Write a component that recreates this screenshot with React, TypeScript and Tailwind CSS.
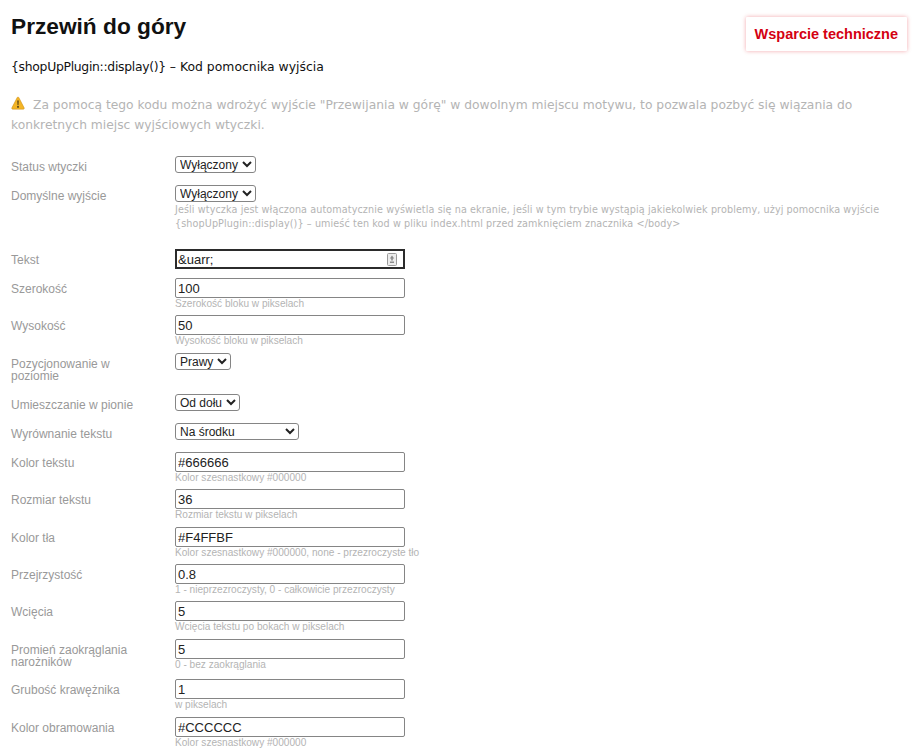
const verdana = "font-['DejaVu_Sans','Liberation_Sans',sans-serif]";

function Hint({ children }: { children: React.ReactNode }) {
  return <p className="text-[10.1px] leading-[12px] text-[#b4b4b4] whitespace-nowrap">{children}</p>;
}

function Row({ label, children, gap }: { label: React.ReactNode; children: React.ReactNode; gap: string }) {
  return (
    <div className={`flex ${gap}`}>
      <div className="w-[164px] shrink-0 pt-[5px] pr-[20px] text-[12px] leading-[12px] text-[#999999]">{label}</div>
      <div>{children}</div>
    </div>
  );
}

function Select({ value, options, width }: { value: string; options: string[]; width: string }) {
  return (
    <select
      defaultValue={value}
      className={`block h-[17px] ${width} rounded-[3px] border border-[#858585] bg-white text-[12px] leading-[15px] text-[#222222]`}
    >
      {options.map((o) => (
        <option key={o}>{o}</option>
      ))}
    </select>
  );
}

function Input({ value }: { value: string }) {
  return (
    <input
      readOnly
      defaultValue={value}
      className="block h-[20px] w-[230px] rounded-[2px] border border-[#858585] bg-white px-[2px] text-[13px] text-[#222222] outline-none"
    />
  );
}

export default function App() {
  return (
    <div className="h-[750px] w-[920px] overflow-hidden bg-white pl-[11px] font-['Liberation_Sans',Arial,sans-serif]">
      <div className="flex items-start justify-between pr-[13px]">
        <h1 className="pt-[14px] text-[22.7px] leading-[25px] font-bold text-[#111111]">Przewiń do góry</h1>
        <a className="mt-[17px] block h-[34px] rounded-[1px] bg-white px-[9px] text-[14.5px] leading-[34px] font-bold text-[#d40012] shadow-[0_0_4px_rgba(220,0,20,0.35)]">
          Wsparcie techniczne
        </a>
      </div>
      <p className={`mt-[8px] text-[12.4px] leading-[16px] text-[#111111] ${verdana}`}>
        <span className="tracking-[-0.3px]">{"{shopUpPlugin::display()}"}</span> – Kod pomocnika wyjścia
      </p>
      <p className={`mt-[20px] h-[50px] pr-[50px] text-[12.3px] leading-[20px] text-[#b4b4b4] ${verdana}`}>
        <svg viewBox="0 0 16 16" className="mr-[8px] inline-block h-[14px] w-[14px] align-[-1px]">
          <path d="M8 1.2c.5 0 .8.3 1 .7l6 11.6c.4.8 0 1.5-.9 1.5H1.9c-.9 0-1.3-.7-.9-1.5L7 1.9c.2-.4.5-.7 1-.7z" fill="#f4b526" stroke="#c98a12" strokeWidth="0.6" />
          <path d="M7.2 5h1.6l-.3 5.5h-1zM7.1 11.5h1.8v1.8H7.1z" fill="#4b3a14" />
        </svg>
        Za pomocą tego kodu można wdrożyć wyjście "Przewijania w górę" w dowolnym miejscu motywu, to pozwala pozbyć się wiązania do konkretnych miejsc wyjściowych wtyczki.
      </p>

      <div className="mt-[11px]">
        <Row label="Status wtyczki" gap="mb-[12px]">
          <Select value="Wyłączony" options={["Wyłączony", "Włączony"]} width="w-[81px]" />
        </Row>
        <Row label="Domyślne wyjście" gap="mb-[18px]">
          <Select value="Wyłączony" options={["Wyłączony", "Włączony"]} width="w-[81px]" />
          <div className={`mt-[1px] w-[720px] text-[9.65px] leading-[14px] tracking-[0.1px] text-[#b4b4b4] whitespace-nowrap ${verdana}`}>
            Jeśli wtyczka jest włączona automatycznie wyświetla się na ekranie, jeśli w tym trybie wystąpią jakiekolwiek problemy, użyj pomocnika wyjście
            <br />
            {"{shopUpPlugin::display()}"} – umieść ten kod w pliku index.html przed zamknięciem znacznika &lt;/body&gt;
          </div>
        </Row>
        <Row label="Tekst" gap="mb-[9px]">
          <div className="relative">
            <input
              readOnly
              value="&amp;uarr;"
              className="block h-[20px] w-[230px] border-2 border-[#2b2b2b] bg-white px-[1px] text-[13px] text-[#222222] outline-none"
            />
            <svg viewBox="0 0 10 13" className="absolute top-[4px] right-[8px] h-[13px] w-[10px]">
              <rect x="0.5" y="0.5" width="9" height="12" rx="1" fill="#ececec" stroke="#9a9a9a" />
              <path d="M5 2.5 7.2 5.5H2.8zM4.2 5.5h1.6v2H4.2zM3 8.5h4v1.5H3z" fill="#8a8a8a" />
            </svg>
          </div>
        </Row>
        <Row label="Szerokość" gap="mb-[5px]">
          <Input value="100" />
          <Hint>Szerokość bloku w pikselach</Hint>
        </Row>
        <Row label="Wysokość" gap="mb-[6px]">
          <Input value="50" />
          <Hint>Wysokość bloku w pikselach</Hint>
        </Row>
        <Row label={<>Pozycjonowanie w poziomie</>} gap="mb-[12px]">
          <Select value="Prawy" options={["Lewy", "Prawy"]} width="w-[56px]" />
        </Row>
        <Row label="Umieszczanie w pionie" gap="mb-[12px]">
          <Select value="Od dołu" options={["Od góry", "Od dołu"]} width="w-[65px]" />
        </Row>
        <Row label="Wyrównanie tekstu" gap="mb-[12px]">
          <Select value="Na środku" options={["Do lewej", "Na środku", "Do prawej strony"]} width="w-[124px]" />
        </Row>
        <Row label="Kolor tekstu" gap="mb-[5px]">
          <Input value="#666666" />
          <Hint>Kolor szesnastkowy #000000</Hint>
        </Row>
        <Row label="Rozmiar tekstu" gap="mb-[6px]">
          <Input value="36" />
          <Hint>Rozmiar tekstu w pikselach</Hint>
        </Row>
        <Row label="Kolor tła" gap="mb-[5px]">
          <Input value="#F4FFBF" />
          <Hint>Kolor szesnastkowy #000000, none - przezroczyste tło</Hint>
        </Row>
        <Row label="Przejrzystość" gap="mb-[5px]">
          <Input value="0.8" />
          <Hint>1 - nieprzezroczysty, 0 - całkowicie przezroczysty</Hint>
        </Row>
        <Row label="Wcięcia" gap="mb-[6px]">
          <Input value="5" />
          <Hint>Wcięcia tekstu po bokach w pikselach</Hint>
        </Row>
        <Row label="Promień zaokrąglania narożników" gap="mb-[8px]">
          <Input value="5" />
          <Hint>0 - bez zaokrąglania</Hint>
        </Row>
        <Row label="Grubość krawężnika" gap="mb-[6px]">
          <Input value="1" />
          <Hint>w pikselach</Hint>
        </Row>
        <Row label="Kolor obramowania" gap="mb-[5px]">
          <Input value="#CCCCCC" />
          <Hint>Kolor szesnastkowy #000000</Hint>
        </Row>
      </div>
    </div>
  );
}
